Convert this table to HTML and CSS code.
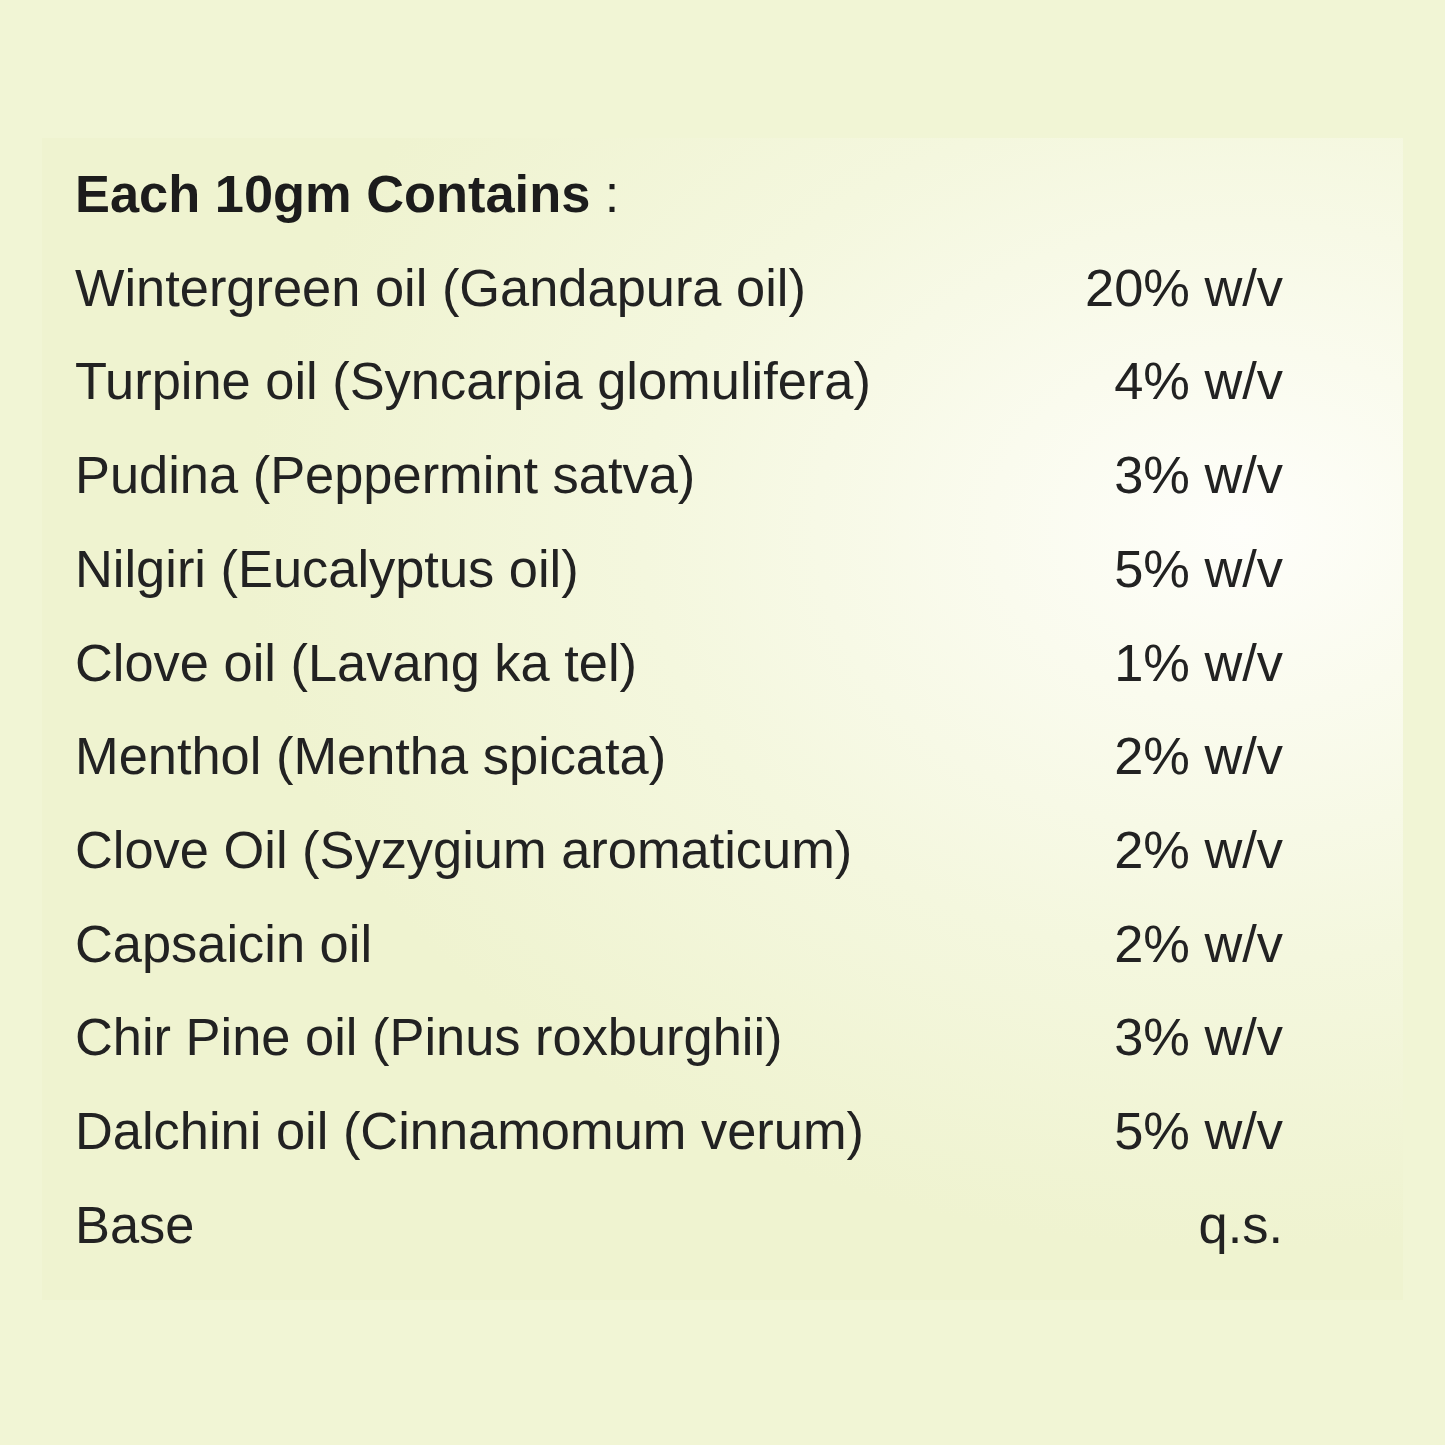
FILE: index.html
```html
<!DOCTYPE html>
<html lang="en">
<head>
<meta charset="utf-8">
<title>Each 10gm Contains</title>
<link rel="stylesheet" href="styles.css">
</head>
<body>
<main class="page">
  <section class="panel">
    <h1 class="heading"><b>Each 10gm Contains</b> :</h1>
    <div class="list">
      <div class="name">Wintergreen oil (Gandapura oil)</div><div class="qty">20% w/v</div>
      <div class="name">Turpine oil (Syncarpia glomulifera)</div><div class="qty">4% w/v</div>
      <div class="name">Pudina (Peppermint satva)</div><div class="qty">3% w/v</div>
      <div class="name">Nilgiri (Eucalyptus oil)</div><div class="qty">5% w/v</div>
      <div class="name">Clove oil (Lavang ka tel)</div><div class="qty">1% w/v</div>
      <div class="name">Menthol (Mentha spicata)</div><div class="qty">2% w/v</div>
      <div class="name">Clove Oil (Syzygium aromaticum)</div><div class="qty">2% w/v</div>
      <div class="name">Capsaicin oil</div><div class="qty">2% w/v</div>
      <div class="name">Chir Pine oil (Pinus roxburghii)</div><div class="qty">3% w/v</div>
      <div class="name">Dalchini oil (Cinnamomum verum)</div><div class="qty">5% w/v</div>
      <div class="name">Base</div><div class="qty">q.s.</div>
    </div>
  </section>
</main>
</body>
</html>
```
FILE: styles.css
```css
html, body {
  margin: 0;
  padding: 0;
}
body {
  background: #f1f5d5;
  width: 1445px;
  height: 1445px;
  overflow: hidden;
  font-family: "Liberation Sans", Arial, sans-serif;
  color: #222222;
}
.page {
  padding: 138px 42px 0 42px;
}
.panel {
  height: 1162px;
  box-sizing: border-box;
  padding: 10px 120px 0 33px;
  background: radial-gradient(ellipse 1000px 720px at 1200px 390px, #fefefa 0%, #fafbee 25%, #f4f7de 60%, #eff3d0 100%);
}
.heading {
  margin: 0;
  font-size: 52.4px;
  font-weight: normal;
  line-height: 93.7px;
  color: #1c1c1c;
}
.heading b {
  font-weight: bold;
}
.list {
  display: grid;
  grid-template-columns: 1fr auto;
  font-size: 52.4px;
  line-height: 93.7px;
}
.qty {
  text-align: right;
}
```
